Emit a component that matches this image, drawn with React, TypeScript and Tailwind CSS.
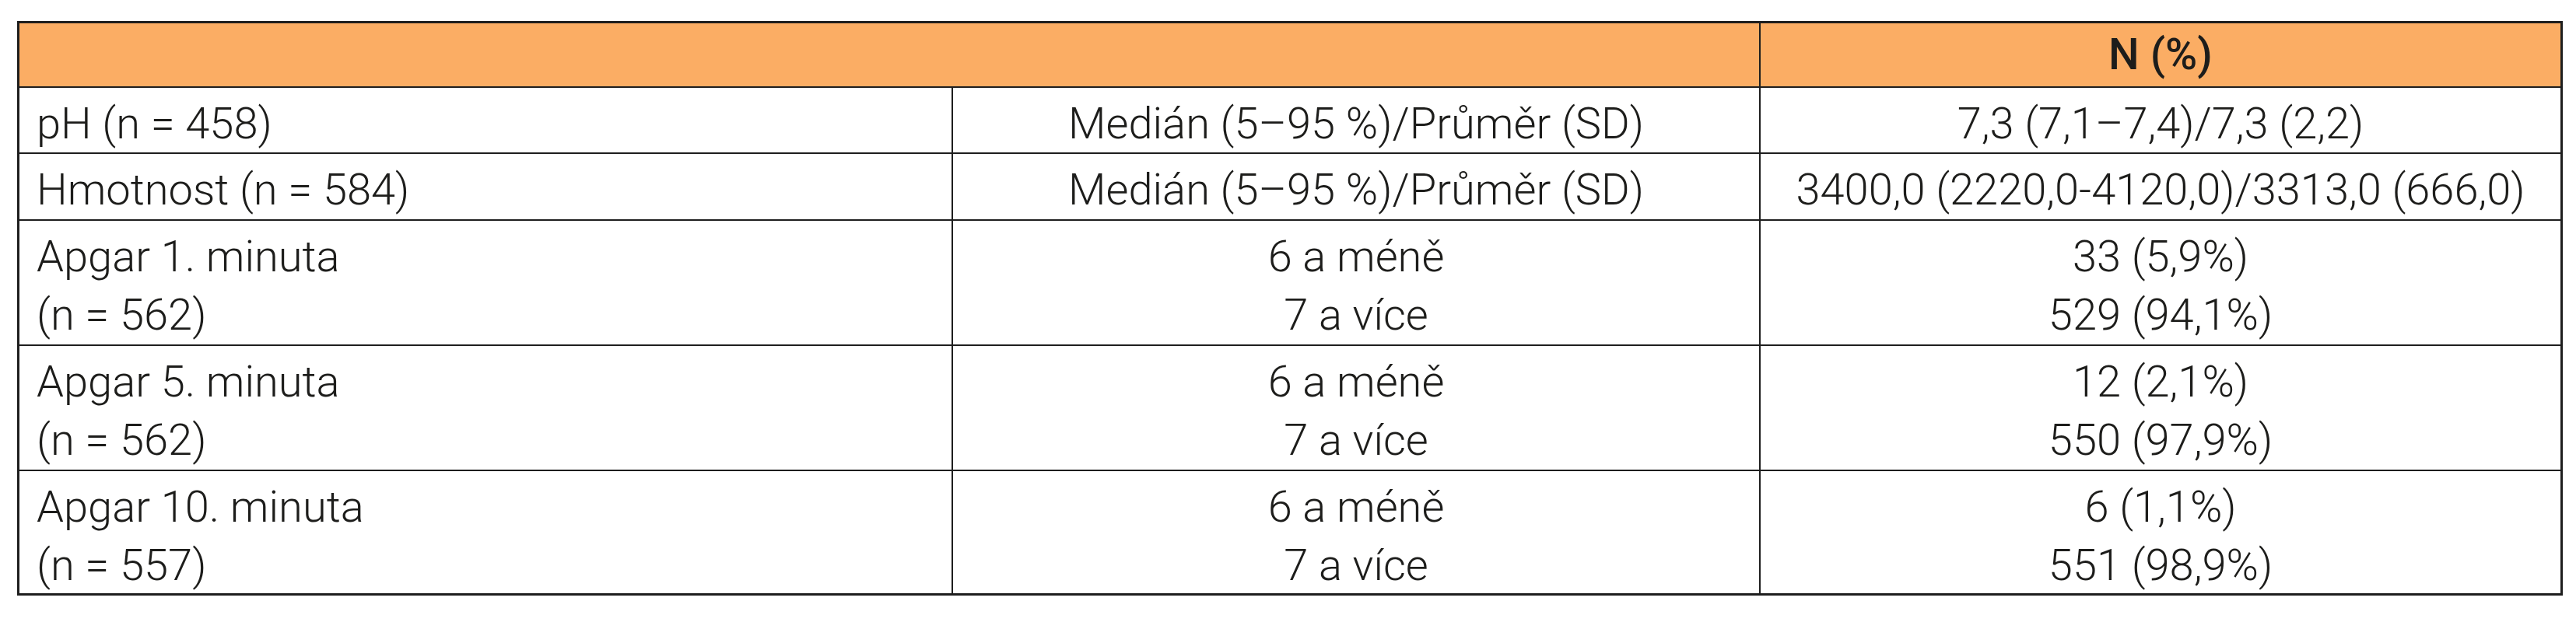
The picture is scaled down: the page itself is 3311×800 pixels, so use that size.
import React from 'react';

interface Row {
  label: string[];
  kind: string[];
  value: string[];
  height: string;
}

const rows: Row[] = [
  { label: ['pH (n = 458)'], kind: ['Medián (5–95 %)/Průměr (SD)'], value: ['7,3 (7,1–7,4)/7,3 (2,2)'], height: 'h-[85px]' },
  { label: ['Hmotnost (n = 584)'], kind: ['Medián (5–95 %)/Průměr (SD)'], value: ['3400,0 (2220,0-4120,0)/3313,0 (666,0)'], height: 'h-[86px]' },
  { label: ['Apgar 1. minuta', '(n = 562)'], kind: ['6 a méně', '7 a více'], value: ['33 (5,9%)', '529 (94,1%)'], height: 'h-[161px]' },
  { label: ['Apgar 5. minuta', '(n = 562)'], kind: ['6 a méně', '7 a více'], value: ['12 (2,1%)', '550 (97,9%)'], height: 'h-[161px]' },
  { label: ['Apgar 10. minuta', '(n = 557)'], kind: ['6 a méně', '7 a více'], value: ['6 (1,1%)', '551 (98,9%)'], height: 'h-[159px]' },
];

const Lines = ({ lines }: { lines: string[] }) => (
  <>
    {lines.map((line, i) => (
      <div key={i}>{line}</div>
    ))}
  </>
);

export default function App() {
  return (
    <div
      className="w-[3311px] h-[800px] bg-white pt-[27px] pl-[22px] text-[#1d1d1b]"
      style={{ fontFamily: 'Roboto, "Liberation Sans", sans-serif' }}
    >
      <div className="w-[3272px] border-[3px] border-[#1e1e1e] text-[56px] font-light leading-[75px]">
        {/* header */}
        <div className="flex h-[81px] bg-[#fbad64]">
          <div className="w-[2236px]" />
          <div className="flex-1 flex items-center justify-center border-l-2 border-[#1e1e1e] font-medium">
            N (%)
          </div>
        </div>

        {rows.map((row, i) => (
          <div key={i} className={`flex border-t-2 border-[#1e1e1e] ${row.height}`}>
            <div className="w-[1198px] pl-[22px] pt-[9px]">
              <Lines lines={row.label} />
            </div>
            <div className="w-[1038px] border-l-2 border-[#1e1e1e] pt-[9px] text-center">
              <Lines lines={row.kind} />
            </div>
            <div className="flex-1 border-l-2 border-[#1e1e1e] pt-[9px] text-center">
              <Lines lines={row.value} />
            </div>
          </div>
        ))}
      </div>
    </div>
  );
}
